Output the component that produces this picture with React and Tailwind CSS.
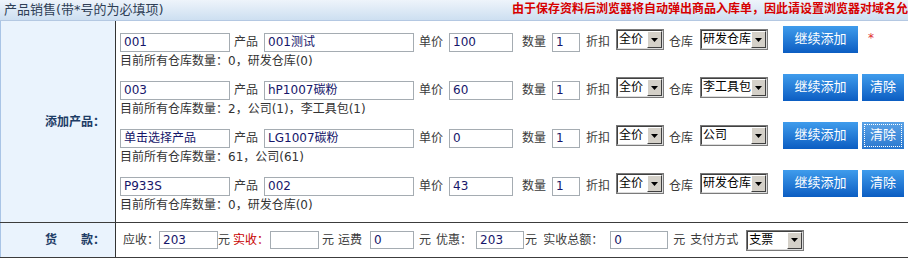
import React from 'react'

const rows = [
  { code: '001', name: '001测试', price: '100', wh: '研发仓库', info: '目前所有仓库数量：0，研发仓库(0)', star: true },
  { code: '003', name: 'hP1007碳粉', price: '60', wh: '李工具包', info: '目前所有仓库数量：2，公司(1)，李工具包(1)' },
  { code: '单击选择产品', name: 'LG1007碳粉', price: '0', wh: '公司', info: '目前所有仓库数量：61，公司(61)', focus: true },
  { code: 'P933S', name: '002', price: '43', wh: '研发仓库', info: '目前所有仓库数量：0，研发仓库(0)' },
]

function Field({ className, value }) {
  return (
    <div className={`shrink-0 border border-[#a5acb2] bg-white px-[3px] text-[#16166a] whitespace-nowrap overflow-hidden ${className}`}>
      {value}
    </div>
  )
}

function Label({ className = '', children }) {
  return <span className={`shrink-0 whitespace-nowrap text-[#3a3a3a] ${className}`}>{children}</span>
}

function Combo({ className, value }) {
  return (
    <div className={`shrink-0 h-[21px] border border-[#7a7a7a] bg-white ${className}`}>
      <div className="flex h-full border border-t-[#404040] border-l-[#404040] border-r-[#dcdcdc] border-b-[#dcdcdc]">
        <span className="flex-1 pl-[1px] text-[12px] leading-[17px] text-black whitespace-nowrap overflow-hidden">{value}</span>
        <div className="flex w-[15px] shrink-0 items-center justify-center border border-t-white border-l-white border-r-[#404040] border-b-[#404040] bg-[#d4d0c8]">
          <svg width="7" height="4" viewBox="0 0 7 4">
            <path d="M0 0h7L3.5 4z" fill="#000" />
          </svg>
        </div>
      </div>
    </div>
  )
}

function BlueButton({ className = '', focus, children }) {
  return (
    <div
      className={`shrink-0 h-[27px] flex items-center justify-center pb-[2px] text-[13px] text-white bg-linear-to-b ${
        focus ? 'from-[#5aa2e6] to-[#2a78cf] outline-1 outline-dotted outline-white -outline-offset-[3px]' : 'from-[#3f9cec] to-[#0b5dc2]'
      } ${className}`}
    >
      {children}
    </div>
  )
}

export default function App() {
  return (
    <div className="w-[908px] h-[259px] overflow-hidden bg-white text-[12px] font-['DejaVu_Sans','Noto_Sans_CJK_SC',sans-serif]">
      <div className="flex h-[21px] border-b border-[#b4c8e2] bg-linear-to-b from-[#eef4fb] to-[#cddff1] overflow-hidden">
        <div className="w-[512px] shrink-0 pl-[4px] text-[13px] leading-[19px] text-[#2f3f56]">产品销售(带*号的为必填项)</div>
        <div className="whitespace-nowrap font-bold leading-[19px] text-[#d60000]">
          由于保存资料后浏览器将自动弹出商品入库单，因此请设置浏览器对域名允许弹出窗口
        </div>
      </div>

      <div className="flex border-b border-[#3c3c3c]">
        <div className="w-[116px] shrink-0 flex items-center justify-end pr-[10px] border-l border-l-[#a9c4e6] border-r border-r-[#333] bg-[#eaf3fd] font-bold text-[#1d3c66]">
          添加产品：
        </div>
        <div className="flex-1 h-[201px]">
          {rows.map((r, i) => (
            <div key={i} className="pt-[5px]">
              <div className="flex items-end h-[27px]">
                <Field className="ml-[4px] w-[110px] h-[19px] mb-[1px] leading-[17px]" value={r.code} />
                <Label className="ml-[4px] mb-[1px] leading-[19px]">产品</Label>
                <Field className="ml-[6px] w-[150px] h-[19px] mb-[1px] leading-[17px]" value={r.name} />
                <Label className="ml-[5px] mb-[1px] leading-[19px]">单价</Label>
                <Field className="ml-[6px] w-[64px] h-[19px] mb-[1px] leading-[17px]" value={r.price} />
                <Label className="ml-[9px] mb-[1px] leading-[19px]">数量</Label>
                <Field className="ml-[6px] w-[28px] h-[19px] mb-[1px] leading-[17px]" value="1" />
                <Label className="ml-[6px] mb-[1px] leading-[19px]">折扣</Label>
                <Combo className="ml-[6px] w-[48px] mb-[3px]" value="全价" />
                <Label className="ml-[5px] mb-[1px] leading-[19px]">仓库</Label>
                <Combo className="ml-[7px] w-[68px] mb-[3px]" value={r.wh} />
                <BlueButton className="ml-[15px] w-[75px]">继续添加</BlueButton>
                {r.star ? (
                  <span className="ml-[10px] mb-[6px] text-[#e03030]">*</span>
                ) : (
                  <BlueButton className="ml-[4px] w-[42px]" focus={r.focus}>清除</BlueButton>
                )}
              </div>
              <div className="h-[16px] pl-[4px] leading-[16px] text-[#333] whitespace-nowrap">{r.info}</div>
            </div>
          ))}
        </div>
      </div>

      <div className="flex border-b border-[#3c3c3c]">
        <div className="w-[116px] shrink-0 flex items-center justify-end pr-[10px] border-l border-l-[#a9c4e6] border-r border-r-[#333] bg-[#eaf3fd] font-bold text-[#1d3c66]">
          货　　款：
        </div>
        <div className="flex-1 h-[34px] flex items-center">
          <Label className="ml-[7px]">应收：</Label>
          <Field className="w-[59px] h-[18px] leading-[16px]" value="203" />
          <Label>元</Label>
          <Label className="ml-[3px] text-[#c80000]!">实收：</Label>
          <Field className="ml-[1px] w-[49px] h-[18px] leading-[16px]" value="" />
          <Label className="ml-[3px]">元</Label>
          <Label className="ml-[4px]">运费</Label>
          <Field className="ml-[8px] w-[44px] h-[18px] leading-[16px]" value="0" />
          <Label className="ml-[5px]">元</Label>
          <Label className="ml-[5px]">优惠：</Label>
          <Field className="ml-[4px] w-[48px] h-[18px] leading-[16px]" value="203" />
          <Label className="ml-[1px]">元</Label>
          <Label className="ml-[6px]">实收总额：</Label>
          <Field className="ml-[7px] w-[58px] h-[18px] leading-[16px]" value="0" />
          <Label className="ml-[5px]">元</Label>
          <Label className="ml-[5px]">支付方式</Label>
          <Combo className="ml-[8px] w-[58px]" value="支票" />
        </div>
      </div>
    </div>
  )
}
